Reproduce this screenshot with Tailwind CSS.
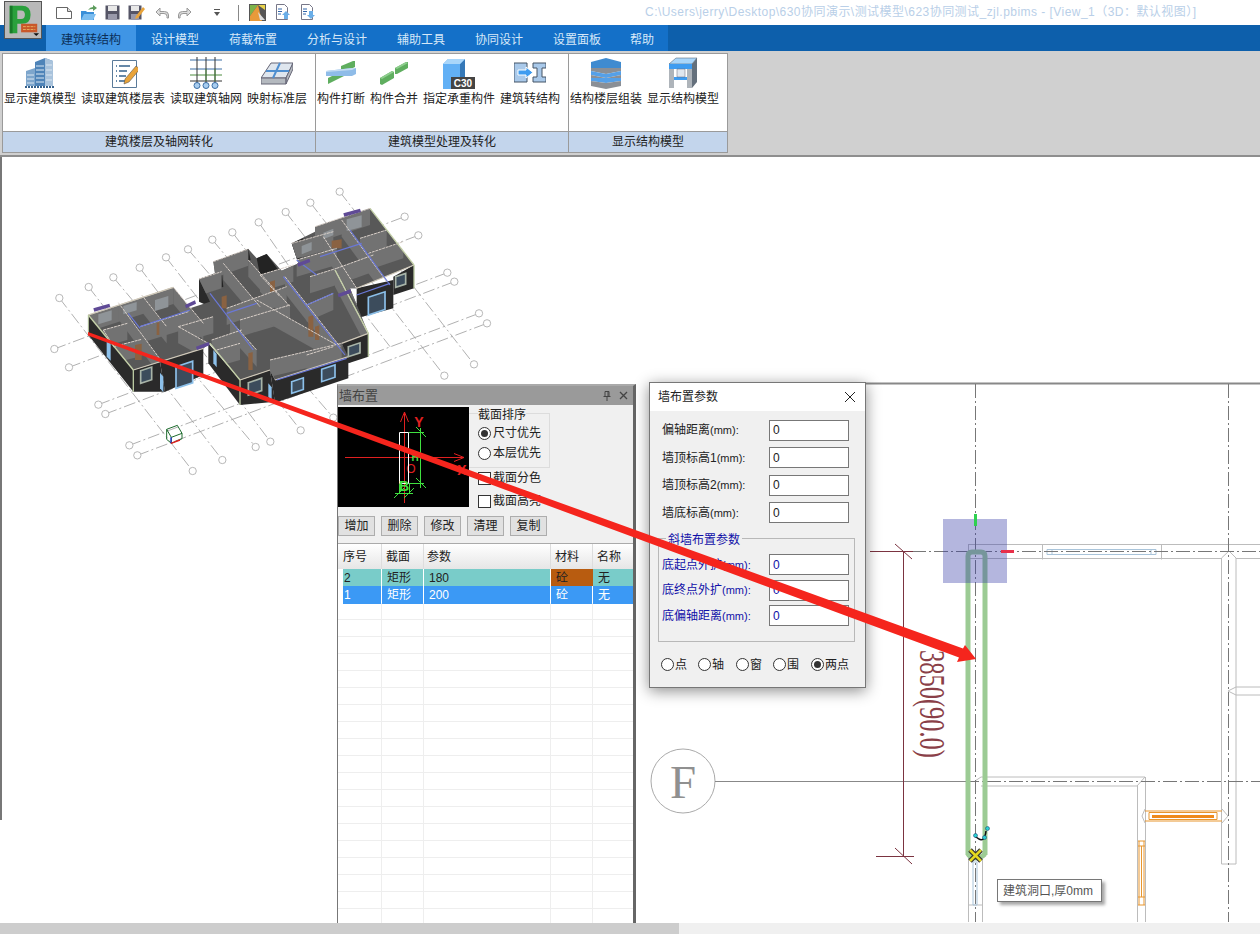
<!DOCTYPE html>
<html lang="zh">
<head>
<meta charset="utf-8">
<title>PBIMS</title>
<script src="https://cdn.jsdelivr.net/npm/@tailwindcss/browser@4"></script>
</head>
<body class="w-[1260px] h-[934px] overflow-hidden bg-white text-[12px] text-[#222] font-['Liberation_Sans','Noto_Sans_CJK_SC',sans-serif]">

<!-- title bar -->
<div class="relative h-[25px] flex items-center">
	<div class="absolute left-[4px] top-[1px] w-[38px] h-[38px] z-10 bg-[#b9b9b9] border border-[#555]">
		<svg viewBox="0 0 38 38" class="w-full h-full">
			<path d="M5 4h13q9 0 9 9.500t-9 9.500h-5v10h-8z" fill="#2aa03c"/>
			<path d="M5 4h3v29h-3z" fill="#187a28"/>
			<path d="M13 9h4q4 0 4 4.500t-4 4.500h-4z" fill="#b9b9b9"/>
			<path d="M17 23h17v9h-17z" fill="#c9582a"/>
			<path d="M19 26h13M19 29h13" stroke="#e8b060" stroke-dasharray="3 1"/>
			<path d="M30 33h6l-3 3z" fill="#111"/>
		</svg>
	</div>
	<div class="flex items-center ml-[56px] gap-[8px]">
		<svg width="16" height="16" viewBox="0 0 16 16"><path d="M.5 2.500h11l4 4v7h-15z" fill="#fff" stroke="#666"/><path d="M11.500 2.500v4h4" fill="#ddd" stroke="#666"/></svg>
		<svg width="17" height="16" viewBox="0 0 17 16"><path d="M1 6h5l1 1h7v8h-13z" fill="#3b8fd8"/><path d="M1 15l3-6h12l-3 6z" fill="#7cbdf0"/><path d="M8 5q2-3 5-3v-2l4 3-4 3v-2q-3 0-5 1z" fill="#5c9c5c"/></svg>
		<svg width="15" height="15" viewBox="0 0 15 15"><path d="M.5.500h14v14h-14z" fill="#556"/><path d="M3 1h9v5h-9z" fill="#e8e8e8"/><path d="M3 9h9v6h-9z" fill="#99a"/></svg>
		<svg width="17" height="15" viewBox="0 0 17 15"><path d="M.5.500h13v14h-13z" fill="#556"/><path d="M3 1h8v5h-8z" fill="#e8e8e8"/><path d="M3 9h8v6h-8z" fill="#99a"/><path d="M8 11l7-9 2 2-7 9-3 1z" fill="#e8a33a"/></svg>
		<svg width="14" height="12" viewBox="0 0 14 12" class="ml-[2px]"><path d="M5 1l-4 4 4 4v-2.500h4q3 0 3 3v1.500h1.500v-3q0-3.500-4-3.500h-4.500z" fill="#ddd" stroke="#999"/></svg>
		<svg width="14" height="12" viewBox="0 0 14 12" class="ml-px"><path d="M9 1l4 4-4 4v-2.500h-4q-3 0-3 3v1.500h-1.500v-3q0-3.500 4-3.500h4.500z" fill="#ddd" stroke="#999"/></svg>
		<svg width="6" height="8" viewBox="0 0 6 8" class="ml-[14px]"><path d="M0 0h6v1h-6zM0 3h6l-3 4z" fill="#555"/></svg>
		<div class="w-px h-[16px] bg-[#888] ml-[10px]"></div>
		<svg width="17" height="17" viewBox="0 0 17 17" class="ml-[2px]"><path d="M0 0h17v17h-17z" fill="#555"/><path d="M1 1h8l-8 11z" fill="#7db34a"/><path d="M9 1h7v5z" fill="#e8d24a"/><path d="M1 12l8-11 4 16h-12z" fill="#e89a3a"/><path d="M9 8l7 8h-5z" fill="#ddd"/></svg>
		<svg width="16" height="17" viewBox="0 0 16 17" class="ml-px"><path d="M1.500.500h8l3 3v12h-11z" fill="#fff" stroke="#778"/><path d="M3 5h4M3 7.500h4M3 10h3" stroke="#36a"/><path d="M11 7l4 4h-2v4h-4v-4h-2z" fill="#6aaee8"/></svg>
		<svg width="16" height="17" viewBox="0 0 16 17" class="ml-px"><path d="M1.500.500h8l3 3v12h-11z" fill="#fff" stroke="#778"/><path d="M3 5h4M3 7.500h4M3 10h3" stroke="#36a"/><path d="M9 7h4v4h2l-4 4-4-4h2z" fill="#6aaee8"/></svg>
	</div>
	<span class="absolute left-[645px] top-[3px] text-[#b9cfe8] whitespace-nowrap tracking-[0.46px]">C:\Users\jerry\Desktop\630协同演示\测试模型\623协同测试_zjl.pbims - [View_1（3D：默认视图）]</span>
</div>

<!-- menu bar -->
<div class="h-[26px] bg-[#0d5fab] pl-[46px] flex">
	<div class="flex items-center pt-[3px] px-[15px] bg-[#3f95e5] text-[#0c2f58]">建筑转结构</div>
	<div class="flex bg-[#1470c8] text-[#d6e8f8]">
		<div class="flex items-center pt-[3px] px-[15px]">设计模型</div>
		<div class="flex items-center pt-[3px] px-[15px]">荷载布置</div>
		<div class="flex items-center pt-[3px] px-[15px]">分析与设计</div>
		<div class="flex items-center pt-[3px] px-[15px]">辅助工具</div>
		<div class="flex items-center pt-[3px] px-[15px]">协同设计</div>
		<div class="flex items-center pt-[3px] px-[15px]">设置面板</div>
		<div class="flex items-center pt-[3px] px-[14px]">帮助</div>
	</div>
</div>

<!-- ribbon -->
<div class="h-[104px] bg-[#d0d0d0] pt-[2px] pl-[2px]">
	<div class="w-[726px] h-[100px] bg-white border border-[#9a9a9a] flex">
		<div class="w-[313px] flex flex-col border-r border-[#9a9a9a]">
			<div class="flex-1 flex gap-[5px] pl-[1px] pt-[3px]">
				<div class="w-[72px] flex flex-col items-center">
					<svg width="30" height="32" viewBox="0 0 30 32"><path d="M10 5l10-4 8 3v25h-18z" fill="#4f84b8"/><path d="M20 1l8 3v25h-8z" fill="#a9c3dc"/><path d="M1 14l9-3v18h-9z" fill="#7ea6cc"/><path d="M11 9h8M11 13h8M11 17h8M11 21h8M11 25h8M21 8h6M21 13h6M21 18h6M21 23h6M2 18h7M2 22h7M2 26h7" stroke="#dbe7f2"/><path d="M0 30h30" stroke="#35618c" stroke-width="2" stroke-dasharray="2 1"/></svg>
					<span class="mt-[1px] whitespace-nowrap">显示建筑模型</span>
				</div>
				<div class="w-[84px] flex flex-col items-center">
					<svg width="30" height="32" viewBox="0 0 30 32"><path d="M4.500 3.500h24v27h-24z" fill="#fff" stroke="#5a7a99"/><path d="M8 9h1M11 9h11M8 14h1M11 14h8M8 19h1M11 19h7M8 24h1M11 24h9" stroke="#35618c" stroke-width="1.500"/><path d="M17 22l11-13 4 3-11 13-5 2z" fill="#e8a33a" stroke="#444" stroke-width=".5"/></svg>
					<span class="mt-[1px] whitespace-nowrap">读取建筑楼层表</span>
				</div>
				<div class="w-[72px] flex flex-col items-center">
					<svg width="32" height="32" viewBox="0 0 32 32"><path d="M0 3h32M0 12h32" stroke="#3b6ea5"/><path d="M0 18h32" stroke="#4c8c3f"/><path d="M0 24h32" stroke="#333"/><path d="M7 0v26M16 0v26M25 0v26" stroke="#333"/><path d="M16 12v12M25 12v12" stroke="#4c8c3f"/><circle cx="7" cy="28.500" r="3" fill="#a8cdf0" stroke="#3b6ea5"/><circle cx="16" cy="28.500" r="3" fill="#a8cdf0" stroke="#3b6ea5"/><circle cx="25" cy="28.500" r="3" fill="#a8cdf0" stroke="#3b6ea5"/></svg>
					<span class="mt-[1px] whitespace-nowrap">读取建筑轴网</span>
				</div>
				<div class="w-[60px] flex flex-col items-center">
					<svg width="32" height="32" viewBox="0 0 32 32"><path d="M0 21l10-15h22l-7 15z" fill="#dfe6ee" stroke="#667"/><path d="M0 21v6h25v-6zM25 21v6l7-15v-6z" fill="#b4b9bf" stroke="#667"/><path d="M5 14h23M19 6l-7 15" stroke="#4f8fd0" stroke-width="2"/></svg>
					<span class="mt-[1px] whitespace-nowrap">映射标准层</span>
				</div>
			</div>
			<div class="h-[21px] bg-[#c3d5ec] border-t border-[#9a9a9a] flex items-center justify-center">建筑楼层及轴网转化</div>
		</div>
		<div class="w-[253px] flex flex-col border-r border-[#9a9a9a]">
			<div class="flex-1 flex gap-[5px] pl-[1px] pt-[3px]">
				<div class="w-[48px] flex flex-col items-center">
					<svg width="32" height="32" viewBox="0 0 32 32"><path d="M3 27v-6l16-8v6z" fill="#5fae5f"/><path d="M16 12v-3l12-5h2v6l-11 5z" fill="#5fae5f"/><path d="M1 14l26-3 4 0v6l-4 2h-26z" fill="#8fbce8"/><path d="M1 14l26-3 4 0-4 2-26 2z" fill="#c4dcf2"/></svg>
					<span class="mt-[1px] whitespace-nowrap">构件打断</span>
				</div>
				<div class="w-[48px] flex flex-col items-center">
					<svg width="32" height="32" viewBox="0 0 32 32"><path d="M2 27v-6l12-7 2 1v6l-12 7z" fill="#5fae5f"/><path d="M17 17v-6l11-6h2v6l-11 6z" fill="#5fae5f"/><path d="M2 21l12-7 2 1-12 7zM17 11l11-6 2 1-11 6z" fill="#8fce8f"/></svg>
					<span class="mt-[1px] whitespace-nowrap">构件合并</span>
				</div>
				<div class="w-[72px] flex flex-col items-center">
					<svg width="32" height="32" viewBox="0 0 32 32"><path d="M0 7l5-5h17v25l-5 5h-17z" fill="#62b0f5"/><path d="M17 7l5-5v25l-5 5z" fill="#3478b8"/><path d="M0 7l5-5h17l-5 5z" fill="#a9d6fa"/><path d="M8 20h24v12h-24z" fill="#444"/><text x="20" y="30" font-size="10" font-weight="700" fill="#fff" text-anchor="middle" font-family="Liberation Sans">C30</text></svg>
					<span class="mt-[1px] whitespace-nowrap">指定承重构件</span>
				</div>
				<div class="w-[60px] flex flex-col items-center">
					<svg width="32" height="32" viewBox="0 0 32 32"><path d="M0 6h13v19h-13zM19 6h13v5h-4v9h4v5h-13v-5h4v-9h-4z" fill="#a9c9ea" stroke="#456"/><path d="M4 13h8v-3l7 5.500-7 5.500v-3h-8z" fill="#3f9cf0" stroke="#fff"/></svg>
					<span class="mt-[1px] whitespace-nowrap">建筑转结构</span>
				</div>
			</div>
			<div class="h-[21px] bg-[#c3d5ec] border-t border-[#9a9a9a] flex items-center justify-center">建筑模型处理及转化</div>
		</div>
		<div class="flex-1 flex flex-col">
			<div class="flex-1 flex gap-[5px] pl-[1px] pt-[3px]">
				<div class="w-[72px] flex flex-col items-center">
					<svg width="32" height="32" viewBox="0 0 32 32"><path d="M1 5l15-4 15 4v6h-30z" fill="#3f8bd0"/><path d="M1 11h30v3l-15 3-15-3z" fill="#8a8f96"/><path d="M1 14l15 3 15-3v4l-15 3-15-3z" fill="#55a0e8"/><path d="M1 18l15 3 15-3v3h-30z" fill="#8a8f96"/><path d="M1 21h30v3l-15 2-15-2z" fill="#55a0e8"/><path d="M1 24l15 2 15-2v5l-15 3-15-3z" fill="#8a8f96"/></svg>
					<span class="mt-[1px] whitespace-nowrap">结构楼层组装</span>
				</div>
				<div class="w-[72px] flex flex-col items-center">
					<svg width="32" height="32" viewBox="0 0 32 32"><path d="M2 7l7-6h21l-5 6z" fill="#a9d6fa" stroke="#456" stroke-width=".5"/><path d="M2 7h23v5h-23z" fill="#3f9cf0"/><path d="M25 7l5-6v24l-5 6z" fill="#64707c"/><path d="M2 12h5v19h-5zM20 12h5v19h-5z" fill="#aeb4ba"/><path d="M7 20h13v3h-13z" fill="#3f9cf0"/><path d="M10 12h8v8h-8z" fill="#dfe6ee" stroke="#667" stroke-width=".5"/></svg>
					<span class="mt-[1px] whitespace-nowrap">显示结构模型</span>
				</div>
			</div>
			<div class="h-[21px] bg-[#c3d5ec] border-t border-[#9a9a9a] flex items-center justify-center">显示结构模型</div>
		</div>
	</div>
</div>

<!-- workspace -->
<div class="relative h-[768px] w-[1260px] overflow-hidden border-t-2 border-[#8e8e8e]">
	<div class="absolute left-0 top-0 w-[2px] h-[663px] bg-[#777]"></div>

	<!-- 3D view -->
	<svg id="model" class="absolute left-[40px] top-[23px]" width="460" height="300" viewBox="0 0 1380 900"></svg>

	<!-- plan view -->
	<svg class="absolute left-0 top-0" width="1260" height="768" viewBox="0 157 1260 768" fill="none">
		<path d="M866 383.500h394" stroke="#888" stroke-width="2"/>
		<circle cx="683" cy="781" r="32" fill="#fff" stroke="#aaa"/>
		<text x="683" y="798" font-size="47" fill="#909090" text-anchor="middle" font-family="Liberation Serif">F</text>
		<path d="M715 781.500h250" stroke="#888"/>
		<!-- walls -->
		<g stroke="#bcbcbc">
			<path d="M968.500 544.500h291.500M968.500 544v14.500h252.500M1236 558.500h24"/>
			<path d="M1221.500 558l7.500-7 7 7v306h-14.500z"/>
			<path d="M1228 691l8-4h24M1228 691l8 4h24"/>
			<path d="M975 781l6-4h164M981 786h156M1145 777l-8 9M1137.500 786v136M1145.500 777v145"/>
			<path d="M968.500 856v66M982.500 856v66M968.500 905h14"/>
			<path d="M1042.500 544.500v15M1161.500 544.500v15"/>
			<path d="M1145 809l-3 7 3 7M1222 809l6 7-6 7"/>
		</g>
		<g stroke="#a9c4da"><path d="M1047 549.500h109v5h-109zM1052 549.500v5M1151 549.500v5M973 862v43h4v-43z"/></g>
		<g stroke="#e8962e"><path d="M1149 812.500h68v7h-68zM1145 811h77M1145 821h77M1139 841v64M1144 841v64M1138 841h7M1138 846h7M1138 897h7M1138 905h7M1141.500 846v51"/><path d="M1152 816.500h62" stroke="#ee8a1c" stroke-width="3"/></g>
		<!-- grid -->
		<path d="M912 551.500h348" stroke="#777" stroke-dasharray="14 3 2 3"/>
		<path d="M965 781.500h295" stroke="#777" stroke-dasharray="14 3 2 3"/>
		<path d="M975.500 384v538M1228.500 384v538" stroke="#777" stroke-dasharray="14 3 2 3"/>
		<!-- selected wall -->
		<path d="M968 855v-299q0-4 4-4h9q4 0 4 4v299" stroke="#9ccb94" stroke-width="5"/>
		<path d="M968 854q2 4 7.500 4t9.500-4" stroke="#9ccb94" stroke-width="5"/>
		<!-- snap box -->
		<path d="M943 519h64v64h-64z" fill="#3b3fa8" fill-opacity=".38"/>
		<path d="M975.500 514v12" stroke="#2fd050" stroke-width="3"/>
		<path d="M1001 551.500h13" stroke="#e8304a" stroke-width="3"/>
		<!-- dimension -->
		<g stroke="#7b3340">
			<path d="M870 551.500h43M876 856.500h38M903.500 551v306M895 544l17 15M895 848l17 16"/>
		</g>
		<text transform="translate(920 650) rotate(90)" font-size="36" fill="#8a3f48" font-family="Liberation Serif" textLength="108" lengthAdjust="spacingAndGlyphs">3850(90.0)</text>
		<!-- snap cursor -->
		<path d="M970 850l11 11M981 850l-11 11" stroke="#333" stroke-width="5"/>
		<path d="M970 850l11 11M981 850l-11 11" stroke="#e4d820" stroke-width="2.500"/>
		<path d="M976 837q6 5 8 1t2-7" stroke="#111" stroke-width="1.500"/>
		<circle cx="975.500" cy="835.500" r="2" fill="#2ad0d0" stroke="#136"  stroke-width=".5"/>
		<circle cx="984.500" cy="837.500" r="2" fill="#2ad0d0" stroke="#136" stroke-width=".5"/>
		<circle cx="987.500" cy="828.500" r="2" fill="#2ad0d0" stroke="#136" stroke-width=".5"/>
	</svg>

	<!-- 墙布置 panel -->
	<div class="absolute left-[337px] top-[227px] w-[299px] h-[539px] bg-[#f0f0f0] border-t-2 border-r-[3px] border-l border-[#777] border-r-[#666] border-t-[#aaa]">
		<div class="h-[19px] bg-[#9a9a9a] flex items-center justify-between pr-[5px]">
			<span class="text-[13px] text-[#444] pl-px">墙布置</span>
			<span class="flex items-center gap-[8px] text-[#444]">
				<svg width="8" height="10" viewBox="0 0 8 10"><path d="M2 .500h4v5h-4zM.5 5.500h7M4 6v4M5 1v4" stroke="#444" fill="none"/></svg>
				<svg width="9" height="9" viewBox="0 0 9 9"><path d="M1 1l7 7M8 1l-7 7" stroke="#444" stroke-width="1.300"/></svg>
			</span>
		</div>
		<div class="flex mt-[2px] h-[100px]">
			<svg width="131" height="100" viewBox="337 407 131 100" class="shrink-0 bg-black" fill="none">
				<g stroke="#e02020"><path d="M403.500 412v91M344 457.500h119M403.500 412l-4 10M403.500 412l4 10M463 457.500l-10-4M463 457.500l-10 4"/></g>
				<text x="418" y="427" fill="#e02020" font-size="14" font-family="Liberation Sans" text-anchor="middle" font-weight="700">Y</text>
				<text x="461" y="475" fill="#e02020" font-size="14" font-family="Liberation Sans" text-anchor="middle" font-weight="700">X</text>
				<text x="410" y="473" fill="#e02020" font-size="12" font-family="Liberation Sans" text-anchor="middle">O</text>
				<path d="M398.500 432.500h9v51h-9z" stroke="#fff"/>
				<g stroke="#3fe03f"><path d="M408 432.500h15M419.500 428v60M408 483.500h15M398.500 484v10M408.500 484v10M394 493.500h18M415 427l10 10M415 478l10 10M393 498l10-10M403 498l10-10"/></g>
				<text x="414" y="461" fill="#3fe03f" font-size="10" font-family="Liberation Sans" text-anchor="middle" font-weight="700">H</text>
				<text x="403" y="491" fill="#3fe03f" font-size="14" font-family="Liberation Sans" text-anchor="middle" font-weight="700">B</text>
			</svg>
			<div class="relative flex-1 pl-[9px]">
				<div class="absolute left-0 top-[6px] w-[81px] h-[55px] border border-[#dcdcdc] border-l-0"></div>
				<div class="relative flex flex-col">
					<span class="bg-[#f0f0f0] w-fit leading-[14px] mt-[1px] text-[12px]">截面排序</span>
					<label class="flex items-center gap-[2px] h-[20px] mt-[1px]"><span class="w-[13px] h-[13px] rounded-full bg-white border border-[#333] flex items-center justify-center"><span class="w-[7px] h-[7px] rounded-full bg-[#333]"></span></span>尺寸优先</label>
					<label class="flex items-center gap-[2px] h-[20px]"><span class="w-[13px] h-[13px] rounded-full bg-white border border-[#333]"></span>本层优先</label>
					<label class="flex items-center gap-[2px] h-[20px] mt-[5px]"><span class="w-[13px] h-[13px] bg-white border border-[#333]"></span>截面分色</label>
					<label class="flex items-center gap-[2px] h-[20px] mt-[3px]"><span class="w-[13px] h-[13px] bg-white border border-[#333]"></span>截面高亮</label>
				</div>
			</div>
		</div>
		<div class="flex gap-[6px] mt-[9px]">
			<div class="w-[37px] h-[20px] bg-[#e1e1e1] border border-[#adadad] flex items-center justify-center">增加</div>
			<div class="w-[37px] h-[20px] bg-[#e1e1e1] border border-[#adadad] flex items-center justify-center">删除</div>
			<div class="w-[37px] h-[20px] bg-[#e1e1e1] border border-[#adadad] flex items-center justify-center">修改</div>
			<div class="w-[37px] h-[20px] bg-[#e1e1e1] border border-[#adadad] flex items-center justify-center">清理</div>
			<div class="w-[37px] h-[20px] bg-[#e1e1e1] border border-[#adadad] flex items-center justify-center">复制</div>
		</div>
		<div id="wall-table" class="mt-[7px] bg-white border-t border-[#aaa] h-[380px] overflow-hidden">
			<div class="grid grid-cols-[44px_42px_127px_42px_41px] h-[25px] bg-gradient-to-b from-white to-[#e6e6e6] text-[12px]">
				<div class="flex items-center pl-[5px] border-r border-[#ddd]">序号</div>
				<div class="flex items-center pl-[4px] border-r border-[#ddd]">截面</div>
				<div class="flex items-center pl-[3px] border-r border-[#ddd]">参数</div>
				<div class="flex items-center pl-[4px] border-r border-[#ddd]">材料</div>
				<div class="flex items-center pl-[4px]">名称</div>
			</div>
			<div class="grid grid-cols-[44px_42px_127px_42px_41px] h-[17px] border-b border-white text-[#222]">
				<div class="flex items-center bg-[#79ccc9] ml-[5px] border-r border-white pl-px">2</div>
				<div class="flex items-center bg-[#79ccc9] border-r border-white pl-[5px]">矩形</div>
				<div class="flex items-center bg-[#79ccc9] border-r border-white pl-[5px]">180</div>
				<div class="flex items-center bg-[#b85c10] pl-[5px]">砼</div>
				<div class="flex items-center bg-[#79ccc9] pl-[5px]">无</div>
			</div>
			<div class="grid grid-cols-[44px_42px_127px_42px_41px] h-[17px] border-b border-white text-white">
				<div class="flex items-center bg-[#3b99f5] ml-[5px] border-r border-white pl-px">1</div>
				<div class="flex items-center bg-[#3b99f5] border-r border-white pl-[5px]">矩形</div>
				<div class="flex items-center bg-[#3b99f5] border-r border-white pl-[5px]">200</div>
				<div class="flex items-center bg-[#3b99f5] border-r border-white pl-[5px]">砼</div>
				<div class="flex items-center bg-[#3b99f5] pl-[5px]">无</div>
			</div>
		</div>
	</div>

	<!-- 墙布置参数 dialog -->
	<div class="absolute left-[649px] top-[225px] w-[217px] h-[306px] bg-[#f0f0f0] border border-[#777] shadow-[0_3px_14px_rgba(0,0,0,0.45)]">
		<div class="h-[28px] bg-white flex items-center justify-between pl-[8px] pr-[9px]">
			<span class="text-[#222]">墙布置参数</span>
			<svg width="12" height="12" viewBox="0 0 12 12"><path d="M1 1l10 10M11 1l-10 10" stroke="#222"/></svg>
		</div>
		<div class="flex flex-col gap-[7.6px] pt-[9px] pl-[12px]">
			<div class="flex items-center h-[20px]"><span class="w-[107px]">偏轴距离<span class="text-[11px]">(mm):</span></span><div class="w-[80px] h-[21px] bg-white border border-[#777] flex items-center pl-[3px]">0</div></div>
			<div class="flex items-center h-[20px]"><span class="w-[107px]">墙顶标高1<span class="text-[11px]">(mm):</span></span><div class="w-[80px] h-[21px] bg-white border border-[#777] flex items-center pl-[3px]">0</div></div>
			<div class="flex items-center h-[20px]"><span class="w-[107px]">墙顶标高2<span class="text-[11px]">(mm):</span></span><div class="w-[80px] h-[21px] bg-white border border-[#777] flex items-center pl-[3px]">0</div></div>
			<div class="flex items-center h-[20px]"><span class="w-[107px]">墙底标高<span class="text-[11px]">(mm):</span></span><div class="w-[80px] h-[21px] bg-white border border-[#777] flex items-center pl-[3px]">0</div></div>
		</div>
		<div class="relative mt-[15px] ml-[8px] w-[197px] h-[104px] border border-[#b8b8b8] text-[#1010a8] pl-[3px] pt-[16px]">
			<span class="absolute left-[7px] -top-[8px] bg-[#f0f0f0] px-[2px]">斜墙布置参数</span>
			<div class="flex flex-col gap-[5.500px]">
				<div class="flex items-center h-[20px]"><span class="w-[107px]">底起点外扩<span class="text-[11px]">(mm):</span></span><div class="w-[80px] h-[21px] bg-white border border-[#777] flex items-center pl-[3px]">0</div></div>
				<div class="flex items-center h-[20px]"><span class="w-[107px]">底终点外扩<span class="text-[11px]">(mm):</span></span><div class="w-[80px] h-[21px] bg-white border border-[#777] flex items-center pl-[3px]">0</div></div>
				<div class="flex items-center h-[20px]"><span class="w-[107px]">底偏轴距离<span class="text-[11px]">(mm):</span></span><div class="w-[80px] h-[21px] bg-white border border-[#777] flex items-center pl-[3px]">0</div></div>
			</div>
		</div>
		<div class="flex items-center mt-[15px] ml-[11px] h-[16px]">
			<label class="flex items-center gap-px w-[37px]"><span class="w-[13px] h-[13px] rounded-full bg-white border border-[#333]"></span>点</label>
			<label class="flex items-center gap-px w-[38px]"><span class="w-[13px] h-[13px] rounded-full bg-white border border-[#333]"></span>轴</label>
			<label class="flex items-center gap-px w-[37px]"><span class="w-[13px] h-[13px] rounded-full bg-white border border-[#333]"></span>窗</label>
			<label class="flex items-center gap-px w-[38px]"><span class="w-[13px] h-[13px] rounded-full bg-white border border-[#333]"></span>围</label>
			<label class="flex items-center gap-px"><span class="w-[13px] h-[13px] rounded-full bg-white border border-[#333] flex items-center justify-center"><span class="w-[7px] h-[7px] rounded-full bg-[#333]"></span></span>两点</label>
		</div>
	</div>

	<!-- tooltip -->
	<div class="absolute left-[997px] top-[722px] w-[105px] h-[23px] bg-white border border-[#777] shadow-[3px_3px_3px_rgba(0,0,0,0.35)] flex items-center pl-[5px] text-[#555] whitespace-nowrap">建筑洞口,厚0mm</div>

	<!-- annotation arrow -->
	<svg class="absolute left-0 top-0 pointer-events-none" width="1260" height="768" viewBox="0 157 1260 768">
		<path d="M88 332L963 648.500 965 645 976 659 957 662 959 657.500 88 335.500z" fill="#f5251d"/>
	</svg>
</div>

<!-- bottom scrollbar -->
<div class="h-[11px] bg-[#f0f0f0]"><div class="w-[679px] h-full bg-[#cdcdcd]"></div></div>

<script type="text/javascript">

	let table = document.getElementById('wall-table');
	let emptyRow = () => {
		let row = document.createElement('div');
		row.className = 'grid grid-cols-[44px_42px_127px_42px_41px] h-[17px] border-b border-[#eeeeee]';
		for (let i = 0; i < 5; i++) {
			let cell = document.createElement('div');
			cell.className = 'border-r border-[#eeeeee]';
			row.appendChild(cell);
		}
		return row;
	};
	for (let i = 0; i < 20; i++) table.appendChild(emptyRow());

	// model is drawn in 3x coordinates of the 3D view
	let svg = document.getElementById('model');
	let html = '';
	let line = (a, col, w, dash) => `<line x1="${a[0]}" y1="${a[1]}" x2="${a[2]}" y2="${a[3]}" stroke="${col}" stroke-width="${w}" ${dash ? 'stroke-dasharray="' + dash + '"' : ''}/>`;
	let poly = (p, col) => `<polygon points="${p}" fill="${col}"/>`;
	let bubble = (x, y) => `<circle cx="${x}" cy="${y}" r="11" fill="#fff" stroke="#aaa" stroke-width="2.500"/>`;

	let axes = [
		[58,354,458,873],[146,321,547,840],[220,292,647,801],[299,263,691,785],[378,232,782,751],[444,208,880,713],
		[811,68,1213,587],[899,35,1302,553],[737,96,1050,500],[656,127,900,480],[577,157,800,450],[517,179,700,400],
		[43,507,1094,110],[87,562,1135,166],[175,674,1222,278],[196,702,1243,305],[268,796,1317,400],[292,826,1341,430]
	];
	axes.forEach(a => {
		html += line(a, '#a0a0a0', 2.5, '36 9 6 9');
		html += bubble(a[0], a[1]);
		if (a[2] > 1090 || a[3] > 700) html += bubble(a[2], a[3]);
	});

	// outer faces
	[
		'145,405 145,465 280,635 280,570', '280,570 360,545 375,635 280,635', '360,545 490,505 490,585 375,635',
		'505,490 505,550 600,675 600,600', '600,600 690,570 705,665 600,675', '690,570 705,600 925,530 925,595 705,668',
		'905,490 985,460 985,530 925,550', '950,325 1060,300 1060,385 950,415', '1060,290 1122,255 1122,325 1060,345',
		'477,297 477,365 510,380 510,330'
	].forEach(p => html += poly(p, '#2a2a2a'));

	let footprint = '145,405 400,322 450,385 510,365 477,297 525,280 520,245 625,207 650,235 680,222 725,272 775,250 755,190 825,155 825,140 990,85 1122,255 950,325 930,325 985,460 905,490 925,530 705,600 690,570 600,600 510,490 490,505 360,545 280,570';
	html += `<clipPath id="fp"><polygon points="${footprint}"/></clipPath>`;
	html += poly(footprint, '#585858');
	[
		'520,245 625,207 632,240 545,275', '477,297 545,275 550,320 510,335', '650,235 680,222 715,270 660,285', '755,190 790,175 795,225 772,240'
	].forEach(p => html += poly(p, '#232323'));

	// interior walls, back ones first so the front ones cover them
	let walls = [
		[145,405,400,322],[825,140,990,85],[755,190,880,155],[520,245,625,207],[477,297,545,275],
		[190,450,262,430],[300,440,445,395],[220,500,305,478],[235,368,362,540],[305,345,380,440],[190,450,222,500],[400,322,490,430],
		[415,440,520,410],[515,480,605,450],[600,420,750,375],[560,385,740,320],[660,285,760,255],[800,375,880,340],[810,290,890,265],
		[415,440,505,490],[550,250,660,380],[625,240,750,380],[650,360,890,495],[735,290,900,500],[885,270,985,460],[570,420,650,510],[660,285,720,350],
		[770,240,890,205],[850,170,950,325],[905,120,1040,305],[960,175,1040,150],[985,220,1090,185],[890,265,1000,225],
		[690,540,905,490],[530,510,600,490],[800,525,880,500]
	].sort((a, b) => (a[1] + a[3]) - (b[1] + b[3]));
	html += '<g clip-path="url(#fp)">';
	walls.forEach(a => html += poly(`${a[0]},${a[1]} ${a[2]},${a[3]} ${a[2]},${a[3]+50} ${a[0]},${a[1]+50}`, '#727272'));
	html += '</g>';

	// back window openings and doors
	[[175,395,215,425],[250,370,290,395],[345,352,385,385],[785,190,815,215],[850,150,880,170],[920,110,965,145]].forEach(w => {
		html += poly(`${w[0]},${w[1]+8} ${w[2]},${w[1]-4} ${w[2]},${w[3]-4} ${w[0]},${w[3]+8}`, '#8f9498');
	});
	[[285,495,305,540],[545,350,560,385],[625,520,638,570],[805,410,820,470],[825,440,838,480],[875,182,905,205],[690,305,705,335],[350,430,358,465]].forEach(d => {
		html += poly(`${d[0]},${d[1]} ${d[2]},${d[1]-4} ${d[2]},${d[3]} ${d[0]},${d[3]}`, '#8a6242');
	});
	walls.forEach(a => html += line(a, '#d8cfc8', 3, '9 2'));
	[[145,405,400,322],[280,570,490,505],[600,600,690,570],[705,600,925,530],[950,325,1122,255],[905,490,985,460]].forEach(a => html += line(a, '#cfc8b8', 3.5));
	html += line([145,405,280,570], '#c4d0a8', 4) + line([510,490,600,600], '#c4d0a8', 4) + line([990,85,1122,255], '#c4d0a8', 4) + line([885,270,985,460], '#c4d0a8', 4) + line([280,570,280,635], '#b8c8a0', 4) + line([600,600,600,675], '#b8c8a0', 4) + line([1122,255,1122,325], '#b8c8a0', 4) + line([985,460,985,530], '#b8c8a0', 4) + line([145,405,145,465], '#b8c8a0', 3);
	[[265,400,300,445],[300,440,450,390],[510,340,640,510],[730,290,915,525],[800,375,880,340],[770,240,830,285],[950,345,1050,310],[710,600,920,535],[560,400,650,370],[930,150,1050,315],[840,230,965,190]].forEach(a => html += line(a, '#6a78d8', 3.5));

	// front windows, skewed to the face they sit in
	let frontWindow = (x0, y0, x1, y1, col) => {
		let d = (x1 - x0) * 0.33;
		return `<polygon points="${x0},${y0} ${x1},${y0-d} ${x1},${y1-d} ${x0},${y1}" fill="#3c4c5c" stroke="${col}" stroke-width="5"/>`;
	};
	[[302,572,335,610,'#a8b4a8'],[408,560,458,625,'#8cc0ea'],[625,608,665,645,'#a8b4a8'],[755,605,790,640,'#8cc0ea'],[845,568,885,605,'#8cc0ea'],[985,352,1035,405,'#8cc0ea'],[1067,290,1097,322,'#a8b4a8'],[925,500,960,530,'#a8b4a8']].forEach(w => {
		html += frontWindow(w[0], w[1], w[2], w[3], w[4]);
	});
	[[200,480,212,530],[360,578,370,625],[685,610,695,650],[520,510,530,550]].forEach(w => {
		html += `<polygon points="${w[0]},${w[1]} ${w[2]},${w[1]+12} ${w[2]},${w[3]+12} ${w[0]},${w[3]}" fill="#8cc0ea"/>`;
	});
	// roof things
	[[160,385,48],[910,100,50],[893,342,38],[468,500,38],[435,375,30],[772,250,36]].forEach(r => {
		html += `<path d="M${r[0]} ${r[1]}l${r[2]} -14l3 10l-${r[2]} 14z" fill="#5f4a96"/>`;
	});
	// view cube
	html += '<path d="M380 748l32-12 14 24-32 12zM380 748v30l14 12 32-14v-16M394 772v18" fill="none" stroke="#1c6a2c" stroke-width="3"/><path d="M393 790v-18" stroke="#2030d0" stroke-width="4"/><path d="M393 790l27-10" stroke="#e02020" stroke-width="4"/>';
	svg.innerHTML = html;
</script>
</body>
</html>
